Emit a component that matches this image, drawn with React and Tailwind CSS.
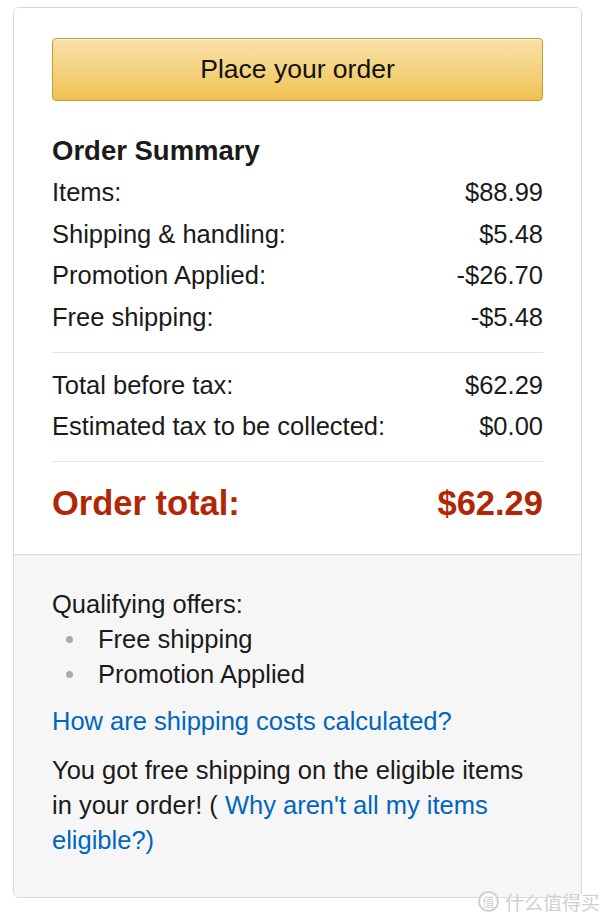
export default function App() {
  const rows1 = [
    ["Items:", "$88.99"],
    ["Shipping & handling:", "$5.48"],
    ["Promotion Applied:", "-$26.70"],
    ["Free shipping:", "-$5.48"],
  ];
  const rows2 = [
    ["Total before tax:", "$62.29"],
    ["Estimated tax to be collected:", "$0.00"],
  ];
  return (
    <div className="relative min-h-[918px] bg-white pt-[7px] pl-[13px] font-['Liberation_Sans',Arial,sans-serif] text-[#1a1a1a]">
      <div className="w-[569px] overflow-hidden rounded-[6px] border border-[#d9d9d9]">
        <div className="bg-white px-[38px] pt-[30px] pb-[30px]">
          <button className="flex h-[63px] w-full items-center justify-center rounded-[4px] border border-[#c29a36] bg-gradient-to-b from-[#f8e1a8] to-[#f0c24d] text-[26.5px] text-[#111] shadow-[inset_0_1px_0_rgba(255,255,255,0.6)]">
            Place your order
          </button>
          <h2 className="mt-[32px] text-[27.5px] font-bold leading-[36px] text-[#1a1a1a]">Order Summary</h2>
          <div className="mt-[3px]">
            {rows1.map(([l, v]) => (
              <div key={l} className="flex justify-between text-[25.5px] leading-[41.67px]">
                <span>{l}</span>
                <span>{v}</span>
              </div>
            ))}
          </div>
          <div className="mt-[13px] h-px bg-[#e4e4e4]" />
          <div className="mt-[12px]">
            {rows2.map(([l, v]) => (
              <div key={l} className="flex justify-between text-[25.5px] leading-[41.67px]">
                <span>{l}</span>
                <span>{v}</span>
              </div>
            ))}
          </div>
          <div className="mt-[13px] h-px bg-[#e4e4e4]" />
          <div className="mt-[20px] flex justify-between text-[34.5px] font-bold leading-[42px] text-[#b12704]">
            <span>Order total:</span>
            <span>$62.29</span>
          </div>
        </div>
        <div className="border-t border-[#dcdcdc] bg-[#f6f6f6] px-[38px] pt-[32px] pb-[39px] text-[25.5px] leading-[35px]">
          <div>Qualifying offers:</div>
          <ul>
            {["Free shipping", "Promotion Applied"].map((t) => (
              <li key={t} className="flex items-center">
                <span className="ml-[14px] mr-[25px] size-[7px] rounded-full bg-[#aaa]" />
                {t}
              </li>
            ))}
          </ul>
          <div className="mt-[12px] text-[#0066c0]">How are shipping costs calculated?</div>
          <p className="mt-[14px]">
            You got free shipping on the eligible items in your order! (&nbsp;<span className="text-[#0066c0]">Why aren't all my items eligible?)</span>
          </p>
        </div>
      </div>
      <div className="absolute left-[478px] top-[891px] flex items-center gap-[6px] text-[#d0d0d0] font-['Noto_Sans_CJK_SC',sans-serif]">
        <span className="flex size-[21px] items-center justify-center rounded-full border-2 border-[#d0d0d0] bg-white text-[12px] leading-none">值</span>
        <span className="text-[19px] leading-none [text-shadow:0_0_2px_#fff]">什么值得买</span>
      </div>
    </div>
  );
}
